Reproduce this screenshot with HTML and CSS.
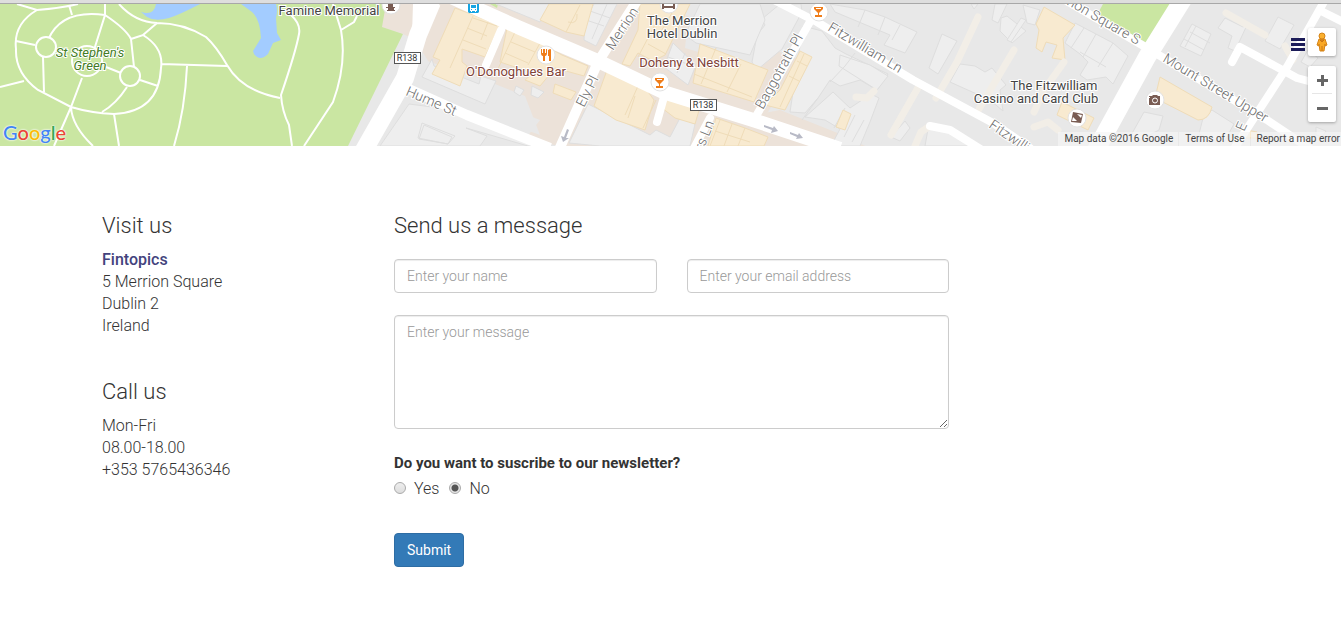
FILE: index.html
```html
<!DOCTYPE html>
<html lang="en">
<head>
<meta charset="utf-8">
<meta name="viewport" content="width=device-width, initial-scale=1">
<title>Contact Fintopics</title>
<link rel="stylesheet" href="styles.css">
</head>
<body>
<section class="map" aria-label="Map of Merrion Square, Dublin">
  <svg class="map-canvas" viewBox="0 4 1341 142" preserveAspectRatio="xMidYMid slice">
    <rect class="ground" y="4" width="1341" height="142"/>

    <!-- commercial areas -->
    <g class="commercial">
      <path d="M380 4H460L520 25 600 60 665 90 755 122 835 146H520L540 120 440 80 415 40 403 34 381 27Z"/>
      <path d="M470 4H650L700 20 800 60 760 125 600 64Z"/>
      <path d="M755 115L780 110 840 134 865 146H740Z"/>
    </g>
    <path class="ground" d="M414 40L424 60 485 80 525 96 540 135 400 84ZM352 146L400 86 540 142 560 146ZM690 4H800L805 20 758 70 685 48Z"/>

    <!-- green space and water -->
    <g class="park">
      <path d="M0 4H386L382 27 403 34 348 146H0Z"/>
      <path d="M1103 4H1171L1147 43 1097 15Z"/>
      <path d="M490 4H498L497 8Z"/>
    </g>
    <path class="water" d="M141 12Q154 16 156 4H200Q179 15 169 18Q155 22 147 17ZM241 4H276Q278 10 276 18L277 33 281 40 273 43 268 54Q260 62 254 54L253 51 261 38Q260 19 252 12Z"/>

    <!-- buildings -->
    <g class="building">
      <path d="M432 59L422 77 485 104 496 81 481 76 479 84 434 66Z"/>
      <path d="M409 104L380 146H480L487 136 466 128 480 132 528 146H545L530 140 440 108Z"/>
      <path d="M422 123L455 136 448 144 418 138ZM424 125L452 137 448 144 419 139Z"/>
      <path d="M588 104L569 143 600 146H690L695 124 680 118 670 137 656 130 650 135Z"/>
      <path d="M594 4L585 20 584 40 596 46 617 4ZM586 20L604 26M590 11L610 18M607 4L592 39"/>
      <path d="M673 43L664 67 688 85 696 65Z"/>
      <path d="M668 57L690 65M677 73L685 53"/>
      <path d="M780 4H801L802 12 782 49 757 70 752 62 757 35 765 25 762 19Z"/>
      <path d="M700 4H760L765 20 750 55 696 43 685 35Z"/>
      <path d="M496 4H550L540 22Z"/>
      <path d="M803 26L822 31 835 48 846 54 888 74 877 90 860 80 840 86 830 80 818 98 805 113 790 112Z"/>
      <path d="M830 4L865 10 885 17 917 32 905 53 884 45 890 35 835 12Z"/>
      <path d="M865 10L858 27M885 17L878 35M900 25L892 40"/>
      <path d="M840 55L870 65 888 76 877 90 839 66ZM830 82L845 66 855 53"/>
      <path d="M942 34L957 41 938 74 929 68Z"/>
      <path d="M960 64L975 66 985 72 992 68 1006 85 1000 90 1003 111 990 100 950 82Z"/>
      <path d="M1007 16L1026 31 1012 43 1000 31 1001 18Z"/>
      <path d="M995 4H1007L998 23 992 20ZM1021 18L1026 20 1011 42 1007 40ZM971 4H978L974 9ZM1023 5L1040 10 1035 25 1027 23Z"/>
      <path d="M805 117L825 120 840 129 831 146H860L870 122 879 98 871 94 850 108 833 92 823 101Z"/>
      <path d="M818 98L802 120M845 108L834 128M855 115L844 137M864 120L852 142"/>
      <path d="M928 129L946 130 965 140 975 146H925ZM905 121L910 128 900 141 891 137Z"/>
      <path d="M1075 23L1065 43 1080 54 1088 62 1080 75 1087 80 1106 77 1113 84 1128 56 1113 43Z"/>
      <path d="M1084 28L1071 48M1096 34L1083 57M1113 43L1098 67M1080 52L1106 67"/>
      <path d="M1192 24L1211 34 1201 56 1180 46ZM1196 26L1185 47M1190 32L1210 43M1184 39L1204 50"/>
      <path d="M1225 18L1243 27 1247 25 1235 51 1228 48 1232 36 1218 28ZM1278 17L1294 25 1280 49 1265 41Z"/>
      <path d="M1144 112L1163 116 1159 130 1140 140 1130 137ZM1203 118L1212 110 1234 124 1223 144 1199 134Z"/>
      <path d="M1308 50L1318 58 1310 67 1301 62ZM1316 127L1326 131 1322 137 1316 135Z"/>
      <path d="M516 86L524 90 520 96 514 92ZM532 86L544 92 538 98 531 95Z"/>
    </g>

    <g class="shop">
      <path d="M455 8L500 25 485 57 462 49 462 62 467 66 460 86 432 74 440 60 433 57Z"/>
      <path d="M473 16L450 68M473 18L497 26M467 28L487 36M463 40L486 49M488 22L481 40"/>
      <path d="M507 28L540 43 562 55 588 66 584 76 555 68 540 86 525 80 533 73 500 62Z"/>
      <path d="M515 32L497 71M540 43L528 65M511 42L535 52M505 53L528 63"/>
      <path d="M549 4H593L584 36 566 32 540 20Z"/>
      <path d="M568 22Q578 25 577 14M566 32L580 5"/>
      <path d="M640 4H690L665 55 653 61 638 53 630 66 622 64 638 30Z"/>
      <path d="M648 44L666 54M659 17L638 57M672 13L660 33"/>
      <path d="M607 70L646 89 654 100 645 130 616 120 594 106Z"/>
      <path d="M638 86L625 115M656 100L643 128M635 96L628 118"/>
      <path d="M700 44L768 70 754 102 693 83Z"/>
      <path d="M716 48L701 84M741 64L727 92M694 74L752 97"/>
      <path d="M665 95L700 107 695 124 675 118 662 108Z"/>
      <path d="M716 118L745 128 768 137 764 146H708Z"/>
      <path d="M720 120L710 146M732 124L724 146M745 128L738 146M715 131L750 142"/>
      <path d="M800 51L812 57 785 110 765 105 780 90Z"/>
      <path d="M804 54L780 107M797 61L807 66M789 76L799 81M843 110L851 114 845 130 836 127Z"/>
      <path d="M1044 7L1075 25 1063 38 1065 60 1052 58 1057 45 1046 42 1042 52 1036 48 1039 30 1036 24Z"/>
      <path d="M555 84L576 92 571 100 553 93Z"/>
      <path d="M1160 77L1212 107Q1209 120 1198 120L1155 98Z"/>
      <path d="M1062 102L1094 118 1088 130 1057 115ZM1247 130L1257 132 1258 138 1246 138Z"/>
    </g>

    <!-- service lanes -->
    <g class="lane">
      <path d="M978 17L957 62 936 98M919 86L891 135M1014 50L979 109M1064 62L1044 90 1034 112M1034 127L1048 122 1058 130M915 146L921 132 930 126"/>
      <path d="M856 97L867 98 874 91M1226 13L1265 35M1285 46L1293 60"/>
    </g>

    <!-- streets -->
    <g class="street">
      <path class="wide" d="M432 2L418 35 405 78 363 152"/>
      <path d="M413 3H440L425 36 412 36Z" fill="#fff" stroke="none"/>
      <path class="main" d="M440 -8L520 28 600 62 663 92 753 120 840 149"/>
      <path class="side" d="M640 -4L598 62 558 152M400 85L467 115 550 148"/>
      <path class="minor" d="M774 0L817 22 913 80 993 123 1030 148M755 118L811 20M501 30L486 65M664 97L657 122M710 118L693 150"/>
      <path class="minor" d="M930 126L950 130 982 150"/>
      <path class="wide" d="M1185 -4L1147 57 1096 150"/>
      <path class="minor" d="M1060 -3L1147 48 1267 120 1312 150M1325 0L1287 67 1232 152M1232 62L1240 47 1297 78 1312 82M1323 12L1345 23"/>
    </g>

    <!-- footpaths in the park -->
    <g class="path">
      <path d="M17 4L37 10Q61 8 78 4M37 10Q13 24 16 49Q15 73 38 90L71 107Q91 113 114 114Q159 112 161 68Q164 48 143 35L131 39M131 39Q126 29 105 15Q61 9 48 40M105 4L105 15 94 50M69 5L72 15M131 39L134 67M143 35L157 23Q183 23 206 37Q216 46 227 65Q242 91 280 98M157 23Q135 22 119 4M161 64L227 66M187 66Q185 110 174 146M16 41L35 45M43 57L44 92M0 87L24 81M82 78L71 107 54 146M71 107Q72 126 93 146M114 114L119 146M127 87Q116 104 102 112M140 80L158 86M106 67L121 73"/>
      <path d="M291 15Q301 24 299 34Q296 51 281 95Q282 111 289 125L292 146M333 4L341 30Q347 64 333 102L304 146M341 30L354 22 357 16"/>
      <circle cx="46" cy="47" r="10"/><circle cx="130" cy="76" r="10"/><circle cx="87" cy="61" r="15"/>
    </g>

    <g class="oneway">
      <path d="M764 125L773 128 774 126 778 131 771 133 772 130 764 127ZM790 132L798 135 799 133 803 138 796 139 797 137 790 134ZM567 129L564 137 561 136 563 142 569 138 566 138 569 130Z"/>
    </g>

    <!-- route shields -->
    <g class="shield">
      <rect x="394.500" y="52.500" width="26" height="11"/><text x="407" y="61">R138</text>
      <rect x="690.500" y="99.500" width="26" height="11"/><text x="703" y="108">R138</text>
    </g>

    <!-- street names -->
    <g class="street-name">
      <text transform="translate(405 95) rotate(23)">Hume St</text>
      <text transform="translate(613 51) rotate(-57)">Merrion</text>
      <text transform="translate(584 108) rotate(-63)">Ely Pl</text>
      <text transform="translate(763 110) rotate(-61)">Baggotrath Pl</text>
      <text transform="translate(827 30) rotate(31)">Fitzwilliam Ln</text>
      <text transform="translate(988 127) rotate(34)">Fitzwilliam Ln</text>
      <text transform="translate(703 151) rotate(-68)">rs Ln</text>
      <text class="to-end" transform="translate(1137 45) rotate(30)">Merrion Square S</text>
      <text transform="translate(1162 61) rotate(31)">Mount Street Upper</text>
      <text transform="translate(1244 132) rotate(-65)">E</text>
    </g>

    <!-- places -->
    <g class="pin">
      <circle cx="391" cy="5" r="9"/><circle cx="546" cy="55" r="9"/><circle cx="669" cy="4" r="9"/>
      <circle cx="660" cy="82" r="9"/><circle cx="819" cy="12" r="9"/><circle cx="1155" cy="100" r="9"/><circle cx="1077" cy="118" r="9"/>
    </g>
    <g fill="#795c53">
      <path d="M388 4H393V7H395V8H394V10H395V11H387V10H388V8H386V7H388ZM662 4H664V6H673V4H675V9H673V8H664V9H662Z"/>
      <path d="M1149 96H1152L1153 95H1157L1158 96H1160V105H1149Z"/>
      <path d="M1073 112L1083 114 1081 123 1071 122Z"/>
    </g>
    <circle cx="1155" cy="100.500" r="2.500" fill="#795c53" stroke="#fff"/>
    <path fill="#fff" d="M1077 114L1082 115 1081 118ZM1073 117L1077 121 1072 121ZM1148 97h2v1h-2z"/>
    <g fill="#ef7d1a">
      <path d="M541 49V53Q541 56 543 56V61H545V56Q547 56 547 53V49H546V53H545V49H543V53H542V49ZM548 50Q551 48 551 50V61H549V56H548Z"/>
      <path d="M655 78H664V80L660 84V86H663V88H656V86H659V84L655 80ZM657 79V80H662V79Z"/>
      <path d="M814 7H823V9L819 13V15H822V17H815V15H818V13L814 9ZM816 8V9H821V8Z"/>
    </g>
    <path fill="#16a5e3" d="M468 3H479V12L478 13H469L468 12Z"/>
    <path fill="#fff" d="M470 4H477V11H476V12H475V11H472V12H471V11H470Z"/>
    <path fill="#16a5e3" d="M471 5H476V8H471ZM471 9H472V10H471ZM475 9H476V10H475Z"/>
    <g class="place">
      <text x="329" y="15">Famine Memorial</text>
      <text x="682" y="25">The Merrion</text><text x="682" y="38">Hotel Dublin</text>
      <text x="1054" y="90">The Fitzwilliam</text><text x="1036" y="103">Casino and Card Club</text>
      <text class="food" x="516" y="76">O'Donoghues Bar</text>
      <text class="food" x="689" y="67">Doheny &amp; Nesbitt</text>
      <text class="green" x="90" y="57">St Stephen's</text><text class="green" x="90" y="70">Green</text>
    </g>
  </svg>
  <a class="logo" href="#map"><span class="blue">G</span><span class="red">o</span><span class="yellow">o</span><span class="blue">g</span><span class="leaf">l</span><span class="red">e</span></a>
  <div class="credits"><span>Map data ©2016 Google</span><a href="#terms">Terms of Use</a><a href="#report">Report a map error</a></div>
  <button class="menu" type="button" aria-label="Menu"><svg viewBox="0 0 14 14"><path d="M0 0h14v3H0zM0 5h14v3H0zM0 10h14v3H0z"/></svg></button>
  <div class="controls">
    <button class="control person" type="button" aria-label="Street View">
      <svg viewBox="0 0 12 20"><path d="M3 7H9L11 13 9 14V12L8 19H4L3 12V14L1 13Z" fill="#f9a825" stroke="#d48318"/><circle cx="6" cy="4" r="3" fill="#fbb02e" stroke="#d48318"/><path d="M4 8H8L6 10ZM6 14V19" fill="#e08a1d" stroke="#c87514"/></svg>
    </button>
    <div class="zoom">
      <button class="control" type="button" aria-label="Zoom in"><svg viewBox="0 0 11 11"><path d="M4 0h3v4h4v3H7v4H4V7H0V4h4z"/></svg></button>
      <button class="control" type="button" aria-label="Zoom out"><svg viewBox="0 0 11 11"><path d="M0 4h11v3H0z"/></svg></button>
    </div>
  </div>
</section>

<main class="contact">
  <div class="details">
    <section>
      <h2>Visit us</h2>
      <address><strong>Fintopics</strong><br>5 Merrion Square<br>Dublin 2<br>Ireland</address>
    </section>
    <section>
      <h2>Call us</h2>
      <p>Mon-Fri<br>08.00-18.00<br>+353 5765436346</p>
    </section>
  </div>
  <form class="message">
    <h2>Send us a message</h2>
    <div class="fields">
      <input type="text" aria-label="Name" placeholder="Enter your name">
      <input type="email" aria-label="Email address" placeholder="Enter your email address">
      <textarea aria-label="Message" placeholder="Enter your message"></textarea>
    </div>
    <fieldset>
      <legend>Do you want to suscribe to our newsletter?</legend>
      <div class="choices">
        <label><input type="radio" name="newsletter" value="yes">Yes</label>
        <label><input type="radio" name="newsletter" value="no" checked>No</label>
      </div>
    </fieldset>
    <button class="submit" type="submit">Submit</button>
  </form>
</main>
</body>
</html>
```
FILE: styles.css
```css
* { box-sizing: border-box; }
body {
  margin: 0;
  border-top: 3px solid #dedede;
  background: #fff;
  color: #333;
  font: 300 16px/22px Roboto, sans-serif;
}
button, input, textarea { font: inherit; }

.map { position: relative; border-top: 1px solid #a8a8a8; }
.map-canvas { display: block; width: 100%; height: 142px; }
.ground { fill: #e8e8e8; }
.commercial { fill: #ece2d9; }
.park { fill: #cae6a2; }
.water { fill: #a3ccff; }
.building { fill: #eeeeee; stroke: #dedede; }
.shop { fill: #f8ead0; stroke: #efdcb8; }
.lane { fill: none; stroke: #f2eee7; stroke-width: 7; stroke-linecap: round; stroke-linejoin: round; }
.street { fill: none; stroke: #fff; stroke-linejoin: round; }
.wide { stroke-width: 18; }
.main { stroke-width: 14; }
.side { stroke-width: 10; }
.minor { stroke-width: 8; stroke-linecap: round; }
.path { fill: none; stroke: #fff; stroke-width: 2; }
.path circle { fill: #cae6a2; }
.oneway { fill: #b8bac6; }
.shield rect { fill: #fff; stroke: #555; }
.shield text { fill: #333; font: 400 9px Roboto, sans-serif; text-anchor: middle; }
.street-name text {
  fill: #6b6b6b;
  stroke: #fff;
  stroke-width: 2px;
  paint-order: stroke;
  font: 300 14px Roboto, sans-serif;
}
.street-name .to-end { text-anchor: end; }
.pin circle { fill: #fff; stroke: #e2e2e2; }
.place text {
  fill: #444;
  stroke: #fff;
  stroke-width: 2px;
  paint-order: stroke;
  font: 400 13px Roboto, sans-serif;
  text-anchor: middle;
}
.place .food { fill: #804238; }
.place .green { fill: #437c24; font-style: italic; }

.logo {
  position: absolute;
  left: 3px;
  bottom: 0;
  font: 500 20px/28px Lato, sans-serif;
  text-decoration: none;
  text-shadow: 0 0 2px #fff, 0 0 2px #fff;
}
.blue { color: #4285f4; }
.red { color: #ea4335; }
.yellow { color: #fbbc05; }
.leaf { color: #34a853; }
.credits {
  position: absolute;
  right: 0;
  bottom: 0;
  display: flex;
  gap: 1px;
  color: #444;
  font: 400 10px/14px Roboto, sans-serif;
}
.credits > * { padding: 0 1px 0 6px; background: rgba(245, 245, 245, .7); color: inherit; text-decoration: none; }
.credits > :not(:last-child) { padding-right: 5px; }
.menu, .control { display: grid; place-items: center; padding: 0; border: 0; background: none; }
.menu { position: absolute; top: 34px; right: 36px; fill: #1c1c58; }
.menu svg { width: 14px; height: 14px; }
.controls { position: absolute; top: 24px; right: 5px; display: grid; gap: 10px; }
.control { width: 28px; height: 28px; fill: #666; }
.control svg { width: 11px; height: 11px; }
.person, .zoom { border-radius: 2px; background: #fff; box-shadow: 0 1px 3px rgba(0, 0, 0, .3); }
.person svg { width: 12px; height: 20px; }
.zoom { position: relative; }
.zoom::after { content: ""; position: absolute; top: 27px; left: 4px; right: 4px; height: 1px; background: #e6e6e6; }

.contact {
  display: grid;
  grid-template-columns: 262px minmax(0, 555px);
  column-gap: 30px;
  max-width: 1137px;
  margin: 0 auto;
  padding: 67px 0;
}
h2 { margin: 0 0 10px; font-size: 22px; line-height: 26px; font-weight: 300; }
.details { display: grid; align-content: start; gap: 42px; }
address, p { margin: 0; font-style: normal; }
strong { color: #43437d; font-weight: 500; }
.message h2 { margin-bottom: 20px; }
.fields { display: grid; grid-template-columns: 1fr 1fr; gap: 22px 30px; }
.fields input, .fields textarea {
  min-width: 0;
  padding: 6px 12px;
  border: 1px solid #ccc;
  border-radius: 4px;
  background: #fff;
  box-shadow: inset 0 1px 1px rgba(0, 0, 0, .075);
  color: #555;
  font-size: 14px;
  line-height: 20px;
}
.fields input { height: 34px; }
.fields textarea { grid-column: 1 / -1; height: 114px; resize: vertical; }
::placeholder { color: #999; opacity: 1; }
fieldset { margin: 23px 0 33px; padding: 0; border: 0; }
legend { padding: 0; font-size: 15px; font-weight: 700; }
.choices { display: flex; gap: 10px; padding-top: 4px; }
.choices label { display: flex; gap: 8px; }
.choices input {
  appearance: none;
  width: 12px;
  height: 12px;
  margin: 4px 0;
  border: 1px solid #aaa;
  border-radius: 50%;
  background: linear-gradient(#eee, #ddd);
}
.choices input:checked { background: radial-gradient(circle, #555 0 3px, #e6e6e6 4px); }
.submit {
  padding: 6px 12px;
  border: 1px solid #2e6da4;
  border-radius: 4px;
  background: #337ab7;
  color: #fff;
  font-size: 14px;
  line-height: 20px;
  font-weight: 400;
}
```
